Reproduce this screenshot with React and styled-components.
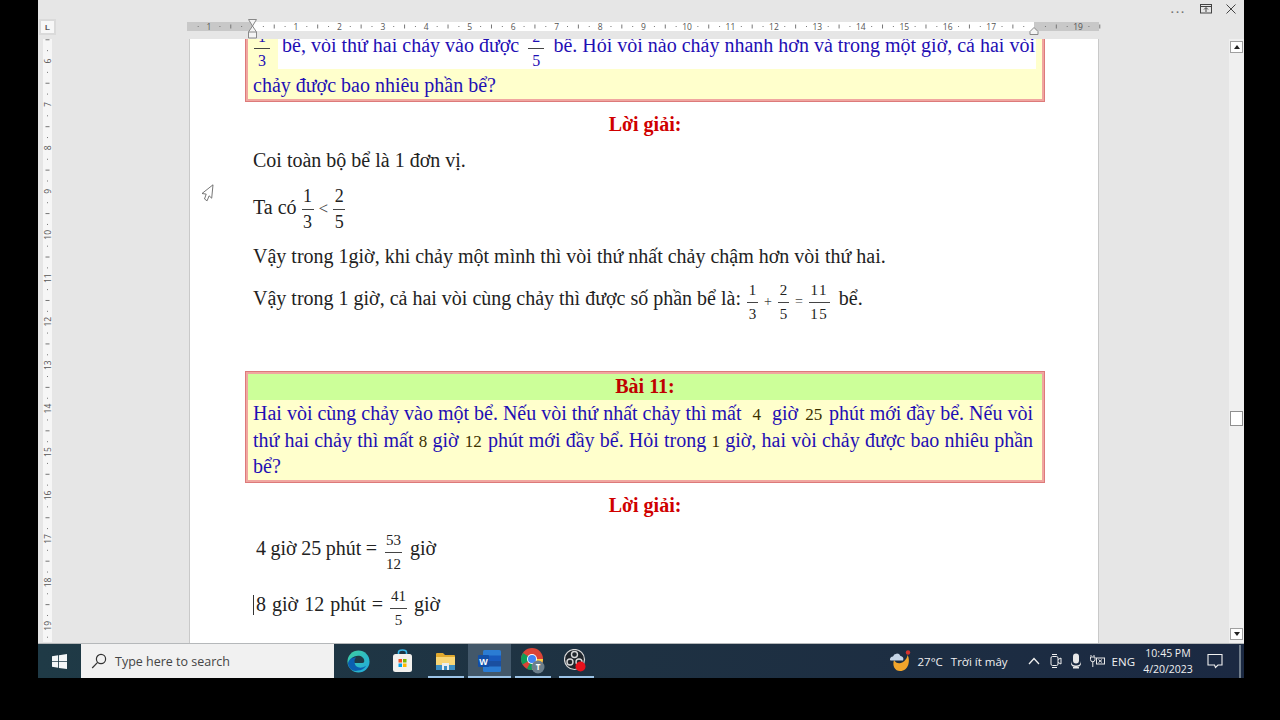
import React from 'react';
import styled, { createGlobalStyle } from 'styled-components';

const GlobalStyle = createGlobalStyle`
  html, body { margin: 0; padding: 0; background: #000; }
  #root { width: 1280px; height: 720px; overflow: hidden; }
`;

const CM = 43.45;

const Frame = styled.div`
  width: 1280px;
  height: 720px;
  background: #000;
  padding: 0 36px 42px 38px;
  box-sizing: border-box;
`;

const Screen = styled.div`
  height: 678px;
  display: flex;
  flex-direction: column;
  background: #e6e6e6;
  overflow: hidden;
`;

/* top of the word window */
const WindowBar = styled.div`
  height: 19px;
  display: flex;
  justify-content: flex-end;
  align-items: center;
  gap: 14px;
  padding: 0 8px 1px 0;
  box-sizing: border-box;
  color: #555;
`;

const Dots = styled.span`
  font: 700 11px "Liberation Sans", sans-serif;
  letter-spacing: 2px;
  color: #777;
`;

const RulerRow = styled.div`
  height: 20px;
  display: flex;
  flex-shrink: 0;
`;

const TabCorner = styled.div`
  width: 13px;
  height: 12px;
  margin: 2px 0 0 3px;
  background: #f7f7f7;
  box-shadow: 0 0 0 2px #dadada;
  display: flex;
  align-items: center;
  justify-content: center;
  font: 700 8px "Liberation Sans", sans-serif;
  color: #555;
`;

const HRulerSlot = styled.div`
  margin-left: 133px;
  width: 912px;
`;

const Work = styled.div`
  flex: 1;
  display: flex;
  min-height: 0;
`;

const LeftGutter = styled.div`
  width: 151px;
  flex-shrink: 0;
  padding-left: 5px;
  box-sizing: border-box;
`;

const Page = styled.main`
  position: relative;
  width: 910px;
  flex-shrink: 0;
  background: #fff;
  overflow: hidden;
  box-sizing: border-box;
  padding: 0 54px 0 56px;
  font-family: "Liberation Serif", "Times New Roman", serif;
  font-size: 20px;
  color: #222;
  box-shadow: inset 1px 0 0 #c9c9c9, inset -1px 0 0 #c9c9c9;
`;

const RightGutter = styled.div`
  width: 130px;
  flex-shrink: 0;
`;

const Scrollbar = styled.div`
  width: 15px;
  flex-shrink: 0;
  background: #f0f0f0;
  display: flex;
  flex-direction: column;
  align-items: center;
  padding: 2px 0 3px;
  box-sizing: border-box;
`;

const ScrollButton = styled.div`
  width: 13px;
  height: 12px;
  background: #fff;
  border: 1px solid #a0a0a0;
  box-sizing: border-box;
  display: flex;
  align-items: center;
  justify-content: center;
  &::before {
    content: '';
    border-left: 3px solid transparent;
    border-right: 3px solid transparent;
    ${(p) => (p.$down ? 'border-top: 4px solid #222;' : 'border-bottom: 4px solid #222;')}
  }
`;

const ScrollThumb = styled.div`
  width: 13px;
  height: 15px;
  margin-top: 358px;
  margin-bottom: auto;
  background: #fff;
  border: 1px solid #8f8f8f;
  box-sizing: border-box;
`;

/* exercise boxes */
const ExerciseBox = styled.section`
  width: 800px;
  box-sizing: border-box;
  border: 1px solid #dd7a7a;
  box-shadow: inset 0 0 0 2px #f0a6a0;
  padding: 2px;
  margin-top: ${(p) => p.$top}px;
  background: #ffffcc;
  color: #1f0fb4;
`;

const BoxHead = styled.div`
  background: #ccff99;
  height: 26px;
  line-height: 25px;
  text-align: center;
  font-weight: 700;
  color: #c00000;
`;

// one printed line of a box, the line breaks are the ones in the document
const BoxLine = styled.p`
  margin: ${(p) => p.$top || 0}px 0 ${(p) => p.$bottom || 0}px;
  padding: 0 9px 0 5px;
  line-height: 26.4px;
  height: 26.4px;
  word-spacing: ${(p) => p.$squeeze || 0}px;
  text-align: ${(p) => (p.$fill ? 'justify' : 'left')};
  text-align-last: ${(p) => (p.$fill ? 'justify' : 'left')};
`;

const Dark = styled.span`
  color: #3a3000;
  font-size: 17px;
  line-height: 1;
  margin: 0 ${(p) => p.$pad ?? 0}px;
`;

const CutRow = styled.div`
  display: flex;
  height: 30px;
  padding-left: 6px;
  align-items: center;
`;

const CutFrac = styled.div`
  width: 24px;
  flex-shrink: 0;
`;

const Highlight = styled.div`
  flex: 1;
  height: 100%;
  margin-right: 6px;
  background: #fff;
  display: flex;
  align-items: center;
  justify-content: space-between;
  padding: 0 1px 0 4px;
  white-space: nowrap;
  line-height: 1;
`;

const Run = styled.span`
  margin-bottom: 18px;
`;

const Solution = styled.h3`
  margin: ${(p) => p.$top}px 0 0;
  font-size: 20px;
  line-height: 22px;
  text-align: center;
  font-weight: 700;
  color: #d00000;
`;

const Para = styled.div`
  display: flex;
  align-items: center;
  gap: ${(p) => p.$gap || 6}px;
  margin-top: ${(p) => p.$top}px;
  margin-left: ${(p) => p.$indent ?? 8}px;
  height: ${(p) => p.$height || 22}px;
  white-space: nowrap;
  word-spacing: ${(p) => p.$spread || 0}px;
`;

// text in a row with a fraction sits higher than the fraction's middle
const Lift = styled.span`
  margin-bottom: ${(p) => p.$by}px;
  margin-left: ${(p) => p.$left || 0}px;
`;

const Frac = styled.span`
  display: inline-flex;
  flex-direction: column;
  align-items: center;
  font-size: ${(p) => p.$size || 15}px;
  line-height: ${(p) => p.$line || 23}px;
  min-width: ${(p) => p.$width || 11}px;
  letter-spacing: ${(p) => p.$track || 0}px;
  margin-bottom: ${(p) => p.$raise || 0}px;
`;

const FracTop = styled.span`
  border-bottom: 1px solid #444;
  align-self: stretch;
  text-align: center;
  padding: 0 1px;
`;

const Sign = styled.span`
  font-size: ${(p) => p.$size || 14}px;
  color: #444;
`;

const Caret = styled.span`
  width: 1px;
  height: 20px;
  background: #333;
  margin-right: -5px;
  margin-bottom: 8px;
`;

const Pointer = styled.svg`
  position: absolute;
  left: 12px;
  top: 145px;
`;

/* taskbar */
const Taskbar = styled.footer`
  height: 35px;
  flex-shrink: 0;
  display: flex;
  align-items: stretch;
  background: linear-gradient(90deg, #1f3a46 0%, #1e3142 50%, #1b2942 100%);
  border-top: 1px solid #b5b8ba;
  box-sizing: border-box;
  color: #f0f0f0;
  font-family: "Open Sans", "Noto Sans", sans-serif;
`;

const StartButton = styled.div`
  width: 43px;
  display: flex;
  align-items: center;
  justify-content: center;
`;

const SearchBox = styled.div`
  width: 253px;
  display: flex;
  align-items: center;
  gap: 8px;
  padding-left: 10px;
  box-sizing: border-box;
  background: #f1f1f1;
  color: #444;
  font-size: 12.5px;
`;

const AppStrip = styled.div`
  display: flex;
  align-items: stretch;
  margin-left: 3px;
`;

const AppSlot = styled.div`
  position: relative;
  width: 43.5px;
  display: flex;
  align-items: center;
  justify-content: center;
  background: ${(p) => (p.$active ? '#43586a' : 'transparent')};
  &::after {
    content: '';
    display: ${(p) => (p.$open ? 'block' : 'none')};
    position: absolute;
    left: ${(p) => (p.$active ? 0 : 4)}px;
    right: ${(p) => (p.$active ? 0 : 4)}px;
    bottom: 0;
    height: 2px;
    background: #9cc4e8;
  }
`;

const Tray = styled.div`
  margin-left: auto;
  display: flex;
  align-items: center;
  font-size: 11.5px;
  padding-right: 3px;
`;

const TrayText = styled.span`
  margin-left: ${(p) => p.$left || 0}px;
  white-space: nowrap;
`;

const TrayIcon = styled.span`
  display: flex;
  margin-left: ${(p) => p.$left}px;
`;

const Clock = styled.div`
  margin-left: 5px;
  width: 56px;
  text-align: center;
  font-size: 10.5px;
  line-height: 16px;
`;

const Sliver = styled.div`
  width: 2px;
  height: 33px;
  background: #6f7c8a;
  margin-left: 16px;
`;

const range = (a, b) => Array.from({ length: b - a + 1 }, (_, i) => a + i);

// ruler drawing, horizontal; x=0 is the left edge of the dark part
const HRuler = () => {
  const zero = 65.5;
  const ticks = range(-5, 78);
  return (
    <svg width="912" height="20" style={{ display: 'block', overflow: 'visible' }}>
      <rect x="0" y="3" width="912" height="9" fill="#fff" />
      <rect x="0" y="3" width={zero} height="9" fill="#c8c8c8" />
      <rect x="847" y="3" width="65" height="9" fill="#c8c8c8" />
      {ticks.map((i) => {
        const x = zero + (i * CM) / 4;
        if (i % 4 === 0) return null;
        return i % 2 === 0
          ? <rect key={i} x={x - 0.5} y="5.5" width="1" height="4" fill="#777" />
          : <rect key={i} x={x - 0.5} y="7" width="1" height="1" fill="#777" />;
      })}
      <text x={zero - CM} y="11" fontSize="8.5" fontFamily="Open Sans" fill="#555" textAnchor="middle">1</text>
      {range(1, 19).filter((n) => n !== 18).map((n) => (
        <text key={n} x={zero + n * CM} y="11" fontSize="8.5" fontFamily="Open Sans" fill="#555" textAnchor="middle">{n}</text>
      ))}
      <path d="M61.500 0.500h8l-4 6.500 4 6v6h-8v-6l4-6z" fill="#f4f4f4" stroke="#888" />
      <path d="M61.500 13h8" stroke="#888" />
      <path d="M847 8.500l4 4v3h-8v-3z" fill="#f4f4f4" stroke="#888" />
    </svg>
  );
};

// ruler drawing, vertical; the numbers sit rotated as Word shows them
const VRuler = () => {
  const first = 22; // y of mark 6
  return (
    <svg width="9" height="603" style={{ display: 'block', background: '#f6f6f6' }}>
      {range(-3, 56).map((i) => {
        const y = first + (i * CM) / 4;
        if (i % 4 === 0) return null;
        return i % 2 === 0
          ? <rect key={i} x="2.500" y={y} width="4" height="1" fill="#777" />
          : <rect key={i} x="4" y={y} width="1" height="1" fill="#777" />;
      })}
      {range(6, 19).map((n) => {
        const y = first + (n - 6) * CM;
        return (
          <text key={n} x="4.500" y={y} fontSize="8.500" fontFamily="Open Sans" fill="#555" textAnchor="middle"
            dominantBaseline="central" transform={`rotate(-90 4.500 ${y})`}>{n}</text>
        );
      })}
    </svg>
  );
};

const WindowsLogo = () => (
  <svg width="15" height="15" viewBox="0 0 16 16" fill="#f4f6f7">
    <path d="M0 2.300l6.500-.9v6.200H0zM7.400 1.300L16 0v7.600H7.400zM0 8.400h6.500v6.200L0 13.700zM7.400 8.400H16V16l-8.600-1.200z" />
  </svg>
);

const SearchGlass = () => (
  <svg width="16" height="16" viewBox="0 0 16 16" fill="none" stroke="#333" strokeWidth="1.200">
    <circle cx="10" cy="6" r="4.600" />
    <path d="M6.600 9.400L1.200 15" />
  </svg>
);

const EdgeIcon = () => (
  <svg width="23" height="23" viewBox="0 0 24 24">
    <defs>
      <linearGradient id="edgeA" x1="0" y1="0" x2="1" y2="1">
        <stop offset="0" stopColor="#3fd0a0" />
        <stop offset="1" stopColor="#1fa8e0" />
      </linearGradient>
    </defs>
    <circle cx="12" cy="12" r="11.500" fill="url(#edgeA)" />
    <path d="M1 14c1-5 5-7 9-7 4 0 6 2 6 4.500 0 1-1 1.500-2 1.500H8c0 4 4 6.500 9 5 1-.3 2-.8 3-1.500-2 3-5 5-8.500 5C6 23 1.500 19 1 14z" fill="#0b5fb0" />
    <path d="M8 13.500h8c1.500 0 2-.8 2-2C18 8 15 6 11.500 6 9 6 6.500 7 5 9c1.500-1 3-1.200 4.500-1C7.500 9 7.800 11.500 8 13.500z" fill="#1f3a46" />
  </svg>
);

const StoreIcon = () => (
  <svg width="21" height="24" viewBox="0 0 21 24">
    <path d="M6.500 6V3.500C6.500 2 8 1 10.500 1S14.500 2 14.500 3.500V6" fill="none" stroke="#36b6e8" strokeWidth="1.600" />
    <rect x="1" y="5" width="19" height="18" rx="2.500" fill="#f3f1ee" />
    <rect x="6.500" y="10" width="3.500" height="3.500" fill="#f25022" />
    <rect x="11" y="10" width="3.500" height="3.500" fill="#7fba00" />
    <rect x="6.500" y="14.500" width="3.500" height="3.500" fill="#00a4ef" />
    <rect x="11" y="14.500" width="3.500" height="3.500" fill="#ffb900" />
  </svg>
);

const FolderIcon = () => (
  <svg width="21" height="20" viewBox="0 0 21 20">
    <path d="M1 3a1 1 0 011-1h6l2 2h9a1 1 0 011 1v3H1z" fill="#e0a92e" />
    <rect x="1" y="6" width="19" height="13" fill="#f8d675" />
    <rect x="1" y="14" width="19" height="5" fill="#3d8fc4" />
    <rect x="7" y="12" width="7" height="7" fill="#e9edf0" />
    <rect x="9" y="15" width="3" height="4" fill="#3d8fc4" />
  </svg>
);

const WordIcon = () => (
  <svg width="23" height="22" viewBox="0 0 23 22">
    <rect x="5" y="0" width="18" height="22" rx="1.500" fill="#2b7cd3" />
    <rect x="5" y="5.500" width="18" height="5.500" fill="#185abd" />
    <rect x="5" y="11" width="18" height="5.500" fill="#1a4fa0" />
    <rect x="0" y="5" width="11" height="12" rx="1" fill="#114fa8" />
    <text x="5.500" y="14.500" fontSize="9" fontWeight="700" fontFamily="Liberation Sans" fill="#fff" textAnchor="middle">W</text>
  </svg>
);

const ChromeIcon = () => (
  <svg width="24" height="26" viewBox="0 0 24 26">
    <circle cx="11" cy="11" r="11" fill="#db4437" />
    <path d="M11 11L1.500 16.500A11 11 0 0 1 2 5z" fill="#0f9d58" />
    <path d="M11 11l9.500 5.500A11 11 0 0 1 6 20.800z" fill="#0f9d58" />
    <path d="M11 11h11a11 11 0 0 1-11 11z" fill="#ffcd40" />
    <circle cx="11" cy="11" r="5" fill="#fff" />
    <circle cx="11" cy="11" r="4" fill="#4285f4" />
    <circle cx="17" cy="19" r="6.500" fill="#6d7f8c" />
    <text x="17" y="22" fontSize="8" fontWeight="700" fontFamily="Open Sans" fill="#fff" textAnchor="middle">T</text>
  </svg>
);

const ObsIcon = () => (
  <svg width="24" height="24" viewBox="0 0 24 24">
    <circle cx="10.500" cy="10.500" r="10" fill="#20262c" stroke="#d8d8d8" strokeWidth="1.200" />
    <circle cx="10.500" cy="5.500" r="3" fill="none" stroke="#d8d8d8" strokeWidth="1.400" />
    <circle cx="6" cy="13" r="3" fill="none" stroke="#d8d8d8" strokeWidth="1.400" />
    <circle cx="15" cy="13" r="3" fill="none" stroke="#d8d8d8" strokeWidth="1.400" />
    <circle cx="16.500" cy="17.500" r="5" fill="#e8121c" />
  </svg>
);

const WeatherIcon = () => (
  <svg width="24" height="24" viewBox="0 0 24 24">
    <path d="M6 11c2 4 8 5 12-1 1-1.500 1.500-3 1.500-4 3 5 1.500 16-7.500 16C7 22 4 17 6 11z" fill="#f2a52b" />
    <path d="M2 11a3 3 0 013-3.500A4 4 0 0112.500 7 3 3 0 0115 11.500H4a2.500 2.500 0 01-2-.5z" fill="#c4d4e6" />
    <circle cx="20" cy="3.500" r="2.200" fill="#d8342e" />
  </svg>
);

const Chevron = () => (
  <svg width="12" height="8" viewBox="0 0 12 8" fill="none" stroke="#f0f0f0" strokeWidth="1.300">
    <path d="M1 7l5-5.500L11 7" />
  </svg>
);

const CameraTray = () => (
  <svg width="12" height="16" viewBox="0 0 12 16" fill="none" stroke="#f0f0f0" strokeWidth="1">
    <rect x="1" y="3.500" width="7" height="9" rx="1.500" />
    <path d="M8 6.500l3-1.500v6l-3-1.500M2 1.500h5M2 14.500h5" />
  </svg>
);

const MicTray = () => (
  <svg width="12" height="16" viewBox="0 0 12 16" fill="#e8e8e8">
    <rect x="3" y="0.500" width="6" height="10" rx="3" />
    <path d="M1 8c0 3 2 4.500 5 4.500S11 11 11 8v2c0 3-2 4-5 4s-5-1-5-4z" />
    <rect x="3" y="14" width="6" height="1.500" />
  </svg>
);

const PowerTray = () => (
  <svg width="16" height="14" viewBox="0 0 16 14" fill="none" stroke="#e8e8e8" strokeWidth="1">
    <path d="M1 1v1.500M4 1v1.500M0.500 3h4.500v2.500a2 2 0 01-4.500 0zM2.800 7.500V13" />
    <rect x="6.500" y="4" width="8" height="6" />
    <path d="M8.500 5.500l3.500 3M12 5.500l-3.500 3" />
  </svg>
);

const Notice = () => (
  <svg width="16" height="16" viewBox="0 0 16 16" fill="none" stroke="#f0f0f0" strokeWidth="1.100">
    <path d="M1 1.500h14v10.500h-4l-2.500 2.500-1-2.500H1z" />
  </svg>
);

const RestoreGlyph = () => (
  <svg width="12" height="10" viewBox="0 0 12 10" fill="none" stroke="#444" strokeWidth="1">
    <rect x="0.500" y="0.500" width="11" height="8.500" />
    <path d="M0.500 2.500h11M6 8V4M4 5.500L6 3.500 8 5.500" />
  </svg>
);

const CloseGlyph = () => (
  <svg width="10" height="10" viewBox="0 0 10 10" stroke="#444" strokeWidth="1">
    <path d="M0.500 0.500l9 9M9.500 0.500l-9 9" />
  </svg>
);

const apps = [
  { key: 'edge', Icon: EdgeIcon },
  { key: 'store', Icon: StoreIcon },
  { key: 'folder', Icon: FolderIcon, open: true },
  { key: 'word', Icon: WordIcon, open: true, active: true },
  { key: 'chrome', Icon: ChromeIcon, open: true },
  { key: 'obs', Icon: ObsIcon, open: true },
];

export default function App() {
  return (
    <Frame>
      <GlobalStyle />
      <Screen>
        <WindowBar>
          <Dots>...</Dots>
          <RestoreGlyph />
          <CloseGlyph />
        </WindowBar>
        <RulerRow>
          <TabCorner>L</TabCorner>
          <HRulerSlot><HRuler /></HRulerSlot>
        </RulerRow>
        <Work>
          <LeftGutter><VRuler /></LeftGutter>
          <Page>
            <ExerciseBox $top={-3}>
              <CutRow>
                <CutFrac>
                  <Frac $size={16} $line={23} $width={16} $raise={12}>
                    <FracTop>1</FracTop>
                    <span>3</span>
                  </Frac>
                </CutFrac>
                <Highlight>
                  <Run>bể, vòi thứ hai chảy vào được</Run>
                  <Frac $size={16} $line={23} $width={16} $raise={12}>
                    <FracTop>2</FracTop>
                    <span>5</span>
                  </Frac>
                  <Run>bể. Hỏi vòi nào chảy nhanh hơn và trong một giờ, cả hai vòi</Run>
                </Highlight>
              </CutRow>
              <BoxLine $top={3} $bottom={1}>chảy được bao nhiêu phần bể?</BoxLine>
            </ExerciseBox>
            <Solution $top={11}>Lời giải:</Solution>
            <Para $top={14}>Coi toàn bộ bể là 1 đơn vị.</Para>
            <Para $top={16} $height={44} $gap={5}>
              <Lift $by={4}>Ta có</Lift>
              <Frac $size={18} $line={25} $width={12}>
                <FracTop>1</FracTop>
                <span>3</span>
              </Frac>
              <Sign $size={17}>&lt;</Sign>
              <Frac $size={18} $line={25} $width={12}>
                <FracTop>2</FracTop>
                <span>5</span>
              </Frac>
            </Para>
            <Para $top={14}>Vậy trong 1giờ, khi chảy một mình thì vòi thứ nhất chảy chậm hơn vòi thứ hai.</Para>
            <Para $top={13} $height={44} $gap={6}>
              <Lift $by={8}>Vậy trong 1 giờ, cả hai vòi cùng chảy thì được số phần bể là:</Lift>
              <Frac>
                <FracTop>1</FracTop>
                <span>3</span>
              </Frac>
              <Sign>+</Sign>
              <Frac>
                <FracTop>2</FracTop>
                <span>5</span>
              </Frac>
              <Sign>=</Sign>
              <Frac $width={21} $track={1.5}>
                <FracTop>11</FracTop>
                <span>15</span>
              </Frac>
              <Lift $by={8} $left={3}>bể.</Lift>
            </Para>
            <ExerciseBox $top={47}>
              <BoxHead>Bài 11:</BoxHead>
              <BoxLine $fill $squeeze={-1}>
                Hai vòi cùng chảy vào một bể. Nếu vòi thứ nhất chảy thì mất <Dark $pad={6}>4</Dark> giờ <Dark $pad={2}>25</Dark> phút mới đầy bể. Nếu vòi
              </BoxLine>
              <BoxLine $fill>
                thứ hai chảy thì mất <Dark>8</Dark> giờ <Dark $pad={1}>12</Dark> phút mới đầy bể. Hỏi trong <Dark>1</Dark> giờ, hai vòi chảy được bao nhiêu phần
              </BoxLine>
              <BoxLine>bể?</BoxLine>
            </ExerciseBox>
            <Solution $top={11}>Lời giải:</Solution>
            <Para $top={15} $height={44} $indent={11} $gap={8} $spread={-0.5}>
              <Lift $by={8}>4 giờ 25 phút =</Lift>
              <Frac $line={23} $width={16}>
                <FracTop>53</FracTop>
                <span>12</span>
              </Frac>
              <Lift $by={8}>giờ</Lift>
            </Para>
            <Para $top={12} $height={44} $gap={7} $spread={1}>
              <Caret />
              <Lift $by={8}>8 giờ 12 phút =</Lift>
              <Frac $line={23} $width={16}>
                <FracTop>41</FracTop>
                <span>5</span>
              </Frac>
              <Lift $by={8}>giờ</Lift>
            </Para>
            <Pointer width="14" height="18" viewBox="0 0 14 18" fill="#fff" stroke="#666" strokeWidth="0.900">
              <path d="M12 0.800L1 9.500l4.200.6L3.500 15l2.600 1.800 2-5 2.600 2.400z" />
            </Pointer>
          </Page>
          <RightGutter />
          <Scrollbar>
            <ScrollButton />
            <ScrollThumb />
            <ScrollButton $down />
          </Scrollbar>
        </Work>
        <Taskbar>
          <StartButton><WindowsLogo /></StartButton>
          <SearchBox>
            <SearchGlass />
            <span>Type here to search</span>
          </SearchBox>
          <AppStrip>
            {apps.map(({ key, Icon, open, active }) => (
              <AppSlot key={key} $open={open} $active={active}>
                <Icon />
              </AppSlot>
            ))}
          </AppStrip>
          <Tray>
            <WeatherIcon />
            <TrayText $left={6}>27°C</TrayText>
            <TrayText $left={8}>Trời ít mây</TrayText>
            <TrayIcon $left={20}><Chevron /></TrayIcon>
            <TrayIcon $left={10}><CameraTray /></TrayIcon>
            <TrayIcon $left={8}><MicTray /></TrayIcon>
            <TrayIcon $left={8}><PowerTray /></TrayIcon>
            <TrayText $left={6}>ENG</TrayText>
            <Clock>
              <div>10:45 PM</div>
              <div>4/20/2023</div>
            </Clock>
            <TrayIcon $left={11}><Notice /></TrayIcon>
            <Sliver />
          </Tray>
        </Taskbar>
      </Screen>
    </Frame>
  );
}
